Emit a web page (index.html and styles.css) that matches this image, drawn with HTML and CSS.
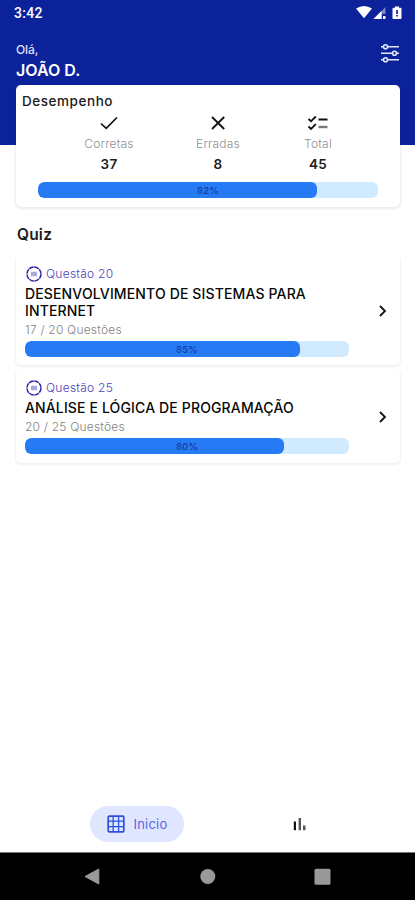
FILE: index.html
```html
<!DOCTYPE html>
<html lang="pt-BR">
<head>
<meta charset="utf-8">
<meta name="viewport" content="width=device-width, initial-scale=1">
<title>Quiz</title>
<link rel="stylesheet" href="styles.css">
</head>
<body>
<div class="screen">
  <header class="header">
    <div class="status">
      <span class="clock">3:42</span>
      <svg class="status-icons" width="48" height="16" viewBox="0 0 48 16" fill="#fff">
        <path d="M0 3.500Q8 -1.500 16 3.500L8 13.200Z"/>
        <path d="M17.500 14L29.500 2V9H26V14Z" opacity=".45"/><path d="M17.500 14L25.500 6V14Z"/><path d="M27 11h2.500v3H27z"/>
        <path d="M40 1.500h4v1.200h1.500q1 0 1 1V13q0 1-1 1h-7q-1 0-1-1V3.700q0-1 1-1H40z" transform="translate(-1 0)"/>
        <path d="M40.200 5h1.700v4h-1.700zM40.200 10h1.700v1.500h-1.700z" fill="#0c229b"/>
      </svg>
    </div>
    <div class="greeting">
      <div>
        <div class="hello">Olá,</div>
        <div class="name">JOÃO D.</div>
      </div>
      <svg class="filters" width="20" height="20" viewBox="0 0 20 20" fill="none" stroke="#e4e8ff" stroke-width="1.600">
        <path d="M1 3.800H3.500M7.500 3.800H19M1 10.200H12.500M16.500 10.200H19M1 16.700H3.500M7.500 16.700H19"/>
        <circle cx="5.500" cy="3.800" r="2"/><circle cx="14.500" cy="10.200" r="2"/><circle cx="5.500" cy="16.700" r="2"/>
      </svg>
    </div>
  </header>

  <main class="content">
    <section class="card summary">
      <h2 class="summary-title">Desempenho</h2>
      <div class="stats">
        <div class="stat">
          <svg width="20" height="16" viewBox="0 0 20 16" fill="none" stroke="#111" stroke-width="1.700"><path d="M2 8.500L7.200 13.300L18 2.500"/></svg>
          <span class="label">Corretas</span><span class="value">37</span>
        </div>
        <div class="stat">
          <svg width="20" height="16" viewBox="0 0 20 16" fill="none" stroke="#111" stroke-width="1.800"><path d="M4 2L16.200 14M16.200 2L4 14"/></svg>
          <span class="label">Erradas</span><span class="value">8</span>
        </div>
        <div class="stat">
          <svg width="22" height="16" viewBox="0 0 22 16" fill="none" stroke="#111" stroke-width="1.900"><path d="M1.500 4L4 6.300L8.800 1.500M1.500 11.500L4 14L8.800 9.200M11.500 4.500H20.500"/><path d="M11.500 12H20.500" stroke="#777" stroke-width="2.400"/></svg>
          <span class="label">Total</span><span class="value">45</span>
        </div>
      </div>
      <div class="bar"><div class="fill" style="width:82%"></div><span class="percent">82%</span></div>
    </section>

    <h1 class="heading">Quiz</h1>

    <article class="card quiz">
      <div class="quiz-body">
        <div class="tag">
          <svg width="16" height="16" viewBox="0 0 16 16" fill="none" stroke="#2925a6"><circle cx="8" cy="8" r="7" stroke-width="1.500" stroke-dasharray="4.900 .6"/><path d="M6 5.700V10.300M8 5.700V10.300M10 5.700V10.300" stroke-width="1.200" opacity=".65"/></svg>
          <span>Questão 20</span>
        </div>
        <h3 class="title">DESENVOLVIMENTO DE SISTEMAS PARA<br>INTERNET</h3>
        <div class="progress">17 / 20 Questões</div>
        <div class="bar"><div class="fill" style="width:85%"></div><span class="percent">85%</span></div>
      </div>
      <svg class="chevron" width="10" height="14" viewBox="0 0 10 14" fill="none" stroke="#111" stroke-width="1.800"><path d="M2 2L7 7L2 12"/></svg>
    </article>

    <article class="card quiz">
      <div class="quiz-body">
        <div class="tag">
          <svg width="16" height="16" viewBox="0 0 16 16" fill="none" stroke="#2925a6"><circle cx="8" cy="8" r="7" stroke-width="1.500" stroke-dasharray="4.900 .6"/><path d="M6 5.700V10.300M8 5.700V10.300M10 5.700V10.300" stroke-width="1.200" opacity=".65"/></svg>
          <span>Questão 25</span>
        </div>
        <h3 class="title">ANÁLISE E LÓGICA DE PROGRAMAÇÃO</h3>
        <div class="progress">20 / 25 Questões</div>
        <div class="bar"><div class="fill" style="width:80%"></div><span class="percent">80%</span></div>
      </div>
      <svg class="chevron" width="10" height="14" viewBox="0 0 10 14" fill="none" stroke="#111" stroke-width="1.800"><path d="M2 2L7 7L2 12"/></svg>
    </article>
  </main>

  <nav class="tabs">
    <div class="tab active">
      <svg width="18" height="18" viewBox="0 0 18 18" fill="none" stroke="#2b50e0"><rect x="1.200" y="1.200" width="15.600" height="15.600" rx="1" stroke-width="1.700"/><path d="M6.200 1V17M11.600 1V17M1 6.200H17M1 11.600H17" stroke-width="1.300"/></svg>
      <span>Inicio</span>
    </div>
    <div class="tab">
      <svg width="14" height="14" viewBox="0 0 14 14"><path d="M.8 4.500H3V13.200H.8z" fill="#111"/><path d="M5.600 1H8V13.200H5.600z" fill="#555"/><path d="M10 8.500H12.500V13.200H10z" fill="#555"/></svg>
    </div>
  </nav>

  <footer class="system">
    <svg width="18" height="18" viewBox="0 0 18 18" fill="#999"><path d="M2 8.500L15.800 1V16Z" stroke="#999" stroke-linejoin="round"/></svg>
    <svg width="18" height="18" viewBox="0 0 18 18" fill="#999"><circle cx="9.800" cy="8.500" r="7.500"/></svg>
    <svg width="18" height="18" viewBox="0 0 18 18" fill="#999"><rect x="1.500" y=".7" width="16" height="16" rx="1.500"/></svg>
  </footer>
</div>
</body>
</html>
```
FILE: styles.css
```css
* { box-sizing: border-box; }
body { margin: 0; background: #fff; font-family: Inter, "Liberation Sans", sans-serif; color: #1b1b1b; }
h1, h2, h3 { margin: 0; }
svg { display: block; flex: none; }

.screen { width: 415px; height: 900px; display: flex; flex-direction: column; overflow: hidden; }

.header { height: 145px; flex: none; background: #0c229b; color: #fff; }
.status { height: 27px; padding: 5px 11px 0 14px; display: flex; justify-content: space-between; }
.clock { font: 500 14px/17px Roboto, sans-serif; letter-spacing: .3px; }
.greeting { display: flex; justify-content: space-between; padding: 14px 15px 0 16px; }
.hello { font-size: 12px; line-height: 18px; font-weight: 500; letter-spacing: -.1px; color: #dfe3fa; }
.name { font-size: 16px; line-height: 22px; font-weight: 600; }
.filters { margin-top: 2px; }

.content { flex: 1; margin-top: -60px; padding: 0 15px 0 16px; }
.card { background: #fff; border-radius: 5px; box-shadow: 0 1px 2px 1px rgba(0, 0, 0, .08); }

.summary { height: 122px; padding: 8px 22px 0; }
.summary-title { margin-left: -16px; font-size: 13.5px; line-height: 17px; font-weight: 500; letter-spacing: .55px; }
.stats { display: grid; grid-template-columns: 104px 114px 86px; justify-content: space-between; margin: 5px 17px 0 19px; }
.stat { display: flex; flex-direction: column; align-items: center; }
.label { margin-top: 4px; font-size: 12px; line-height: 18px; font-weight: 300; letter-spacing: .2px; color: #909090; }
.value { margin-top: 2px; font-size: 13.5px; line-height: 18px; font-weight: 600; letter-spacing: .2px; }

.bar { position: relative; height: 16px; border-radius: 6px; background: #d0eaff; overflow: hidden; }
.fill { height: 100%; border-radius: 6px; background: #267bf4; }
.percent { position: absolute; inset: 0; text-align: center; font-size: 9.5px; line-height: 17px; font-weight: 500; letter-spacing: .2px; color: #103ca0; }
.summary .bar { margin-top: 9px; }

.heading { margin: 18px 0 10px 1px; font-size: 15.5px; line-height: 20px; font-weight: 600; letter-spacing: .2px; }

.quiz { height: 110px; padding: 9px 12px 8px 9px; display: flex; align-items: flex-start; justify-content: space-between; box-shadow: 0 1px 2px 1px rgba(0, 0, 0, .06); }
.quiz + .quiz { height: 94px; margin-top: 4px; }
.quiz-body { width: 324px; }
.chevron { align-self: center; }
.tag { display: flex; align-items: center; gap: 4px; padding-left: 1px; height: 19px; font-size: 12px; font-weight: 300; color: #4a44b4; letter-spacing: .25px; }
.title { font-size: 14px; line-height: 17px; font-weight: 500; color: #080808; padding-top: 2px; letter-spacing: .14px; white-space: nowrap; }
.progress { font-size: 12px; line-height: 18px; font-weight: 300; color: #828282; letter-spacing: .2px; margin: 2px 0; }

.tabs { height: 56px; flex: none; display: grid; grid-template-columns: 94px 20px; column-gap: 106px; padding-left: 90px; align-items: center; }
.tab { display: flex; align-items: center; justify-content: center; }
.active { height: 36px; border-radius: 18px; background: #e0e6ff; gap: 9px; color: #5a66e4; font-size: 13px; letter-spacing: .2px; }

.system { height: 48px; flex: none; background: #000; border-top: 1px solid #777; display: flex; justify-content: space-between; align-items: center; padding: 0 84px 0 83px; }
```
